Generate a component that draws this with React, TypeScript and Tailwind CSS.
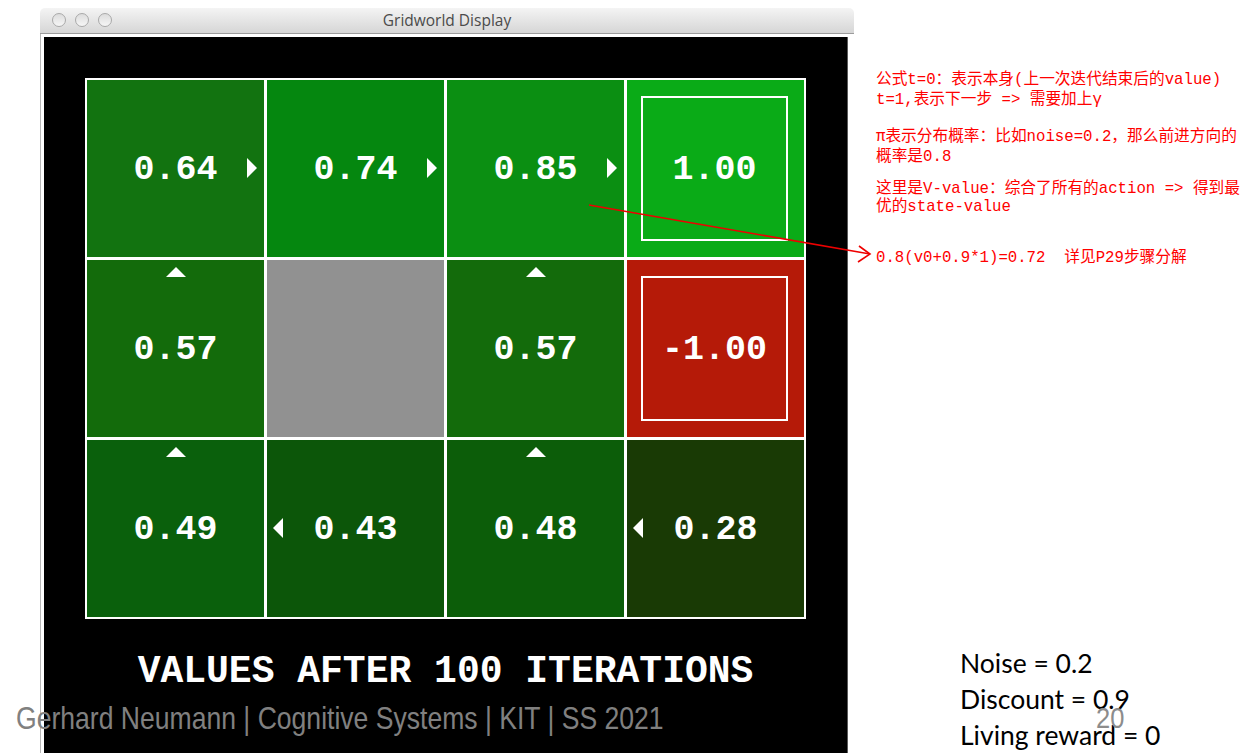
import React from "react";

type Dir = "right" | "left" | "up" | null;
type Cell = { v?: string; bg: string; dir?: Dir; terminal?: boolean; wall?: boolean };

const rows: Cell[][] = [
  [
    { v: "0.64", bg: "bg-[#127310]", dir: "right" },
    { v: "0.74", bg: "bg-[#05870f]", dir: "right" },
    { v: "0.85", bg: "bg-[#0b8f12]", dir: "right" },
    { v: "1.00", bg: "bg-[#0aab17]", terminal: true },
  ],
  [
    { v: "0.57", bg: "bg-[#136b0b]", dir: "up" },
    { bg: "bg-[#919191]", wall: true },
    { v: "0.57", bg: "bg-[#136b0b]", dir: "up" },
    { v: "-1.00", bg: "bg-[#b51a08]", terminal: true },
  ],
  [
    { v: "0.49", bg: "bg-[#0a600c]", dir: "up" },
    { v: "0.43", bg: "bg-[#0c5609]", dir: "left" },
    { v: "0.48", bg: "bg-[#0c5d09]", dir: "up" },
    { v: "0.28", bg: "bg-[#193a05]", dir: "left" },
  ],
];

function Arrow({ dir }: { dir: Dir }) {
  if (dir === "right")
    return (
      <svg className="absolute right-[7px] top-[78px]" width="10" height="20" viewBox="0 0 10 20">
        <polygon points="0,0 10,10 0,20" fill="#fff" />
      </svg>
    );
  if (dir === "left")
    return (
      <svg className="absolute left-[6px] top-[78px]" width="10" height="20" viewBox="0 0 10 20">
        <polygon points="10,0 0,10 10,20" fill="#fff" />
      </svg>
    );
  if (dir === "up")
    return (
      <svg className="absolute left-[79px] top-[7px]" width="20" height="10" viewBox="0 0 20 10">
        <polygon points="0,10 10,0 20,10" fill="#fff" />
      </svg>
    );
  return null;
}

const mono = "font-['Liberation_Mono','Courier_New',monospace]";

function GridCell({ c }: { c: Cell }) {
  const txt = (
    <span className={`${mono} font-bold text-[35px] leading-none text-white mt-[4px]`}>{c.v}</span>
  );
  if (c.wall) return <div className={`${c.bg} w-[177px] h-[177px]`} />;
  if (c.terminal)
    return (
      <div className={`${c.bg} w-[177px] h-[177px] pt-[16px] pb-[16px] pl-[14px] pr-[16px] flex`}>
        <div className="flex-1 border-2 border-white flex items-center justify-center">{txt}</div>
      </div>
    );
  return (
    <div className={`${c.bg} relative w-[177px] h-[177px] flex items-center justify-center`}>
      {txt}
      <Arrow dir={c.dir ?? null} />
    </div>
  );
}

export default function App() {
  const cjk = "font-['Liberation_Mono','Noto_Sans_CJK_SC',monospace]";
  return (
    <div className="relative w-[1244px] h-[753px] bg-white overflow-hidden flex">
      {/* window */}
      <div className="pl-[40px] pt-[8px] shrink-0">
        <div className="w-[814px]">
          <div className="h-[26px] rounded-t-[5px] bg-gradient-to-b from-[#f4f4f4] to-[#d6d6d6] border-b border-[#9c9c9c] relative flex items-center justify-center">
            <div className="absolute left-[12px] top-[5px] flex gap-[9px]">
              <div className="w-[14px] h-[14px] rounded-full border border-[#a9a9a9] bg-gradient-to-b from-[#dcdcdc] to-[#f6f6f6]" />
              <div className="w-[14px] h-[14px] rounded-full border border-[#a9a9a9] bg-gradient-to-b from-[#dcdcdc] to-[#f6f6f6]" />
              <div className="w-[14px] h-[14px] rounded-full border border-[#a9a9a9] bg-gradient-to-b from-[#dcdcdc] to-[#f6f6f6]" />
            </div>
            <span className="font-['Open_Sans',sans-serif] text-[15.5px] text-[#4b4b4b] leading-none">Gridworld Display</span>
          </div>
          <div className="w-[808px] bg-white border-l border-[#b8b8b8] pt-[3px] pl-[3px]">
            <div className="w-[804px] h-[720px] bg-black border-r border-[#5a5a5a] pt-[41px] pl-[41px]">
              <div className="w-[721px] bg-white p-[2px] grid grid-cols-4 gap-[3px]">
                {rows.flat().map((c, i) => (
                  <GridCell key={i} c={c} />
                ))}
              </div>
              <div className="w-[721px] mt-[34px] text-center">
                <span className={`${mono} font-bold text-[38px] leading-[38px] text-white`}>VALUES AFTER 100 ITERATIONS</span>
              </div>
            </div>
          </div>
        </div>
      </div>

      {/* right column */}
      <div className="flex-1 flex flex-col">
        <div className={`${cjk} text-[#ff0000] text-[15.7px] pl-[22px] pt-[70px]`}>
          <div className="leading-[20px]">
            <div>公式t=0：表示本身(上一次迭代结束后的value)</div>
            <div>t=1,表示下一步 =&gt; 需要加上γ</div>
          </div>
          <div className="leading-[20px] mt-[17px]">
            <div>π表示分布概率：比如noise=0.2，那么前进方向的</div>
            <div>概率是0.8</div>
          </div>
          <div className="leading-[18px] mt-[13px]">
            <div>这里是V-value：综合了所有的action =&gt; 得到最</div>
            <div>优的state-value</div>
          </div>
          <div className="leading-[20px] mt-[32px] whitespace-pre">0.8(v0+0.9*1)=0.72  详见P29步骤分解</div>
        </div>
        <div className="mt-auto pl-[106px] font-['Lato',sans-serif] text-[26.5px] leading-[36px] text-black">
          <div>Noise = 0.2</div>
          <div>Discount = 0.9</div>
          <div>Living reward = 0</div>
        </div>
      </div>

      {/* slide footer overlays */}
      <div className="absolute left-[16px] top-[700px] origin-left scale-x-[0.83] font-['Liberation_Sans',sans-serif] text-[32px] leading-[36px] text-[#808080] whitespace-nowrap">
        Gerhard Neumann | Cognitive Systems | KIT | SS 2021
      </div>
      <div className="absolute left-[1096px] top-[700px] origin-left scale-x-[0.85] font-['Liberation_Sans',sans-serif] text-[30px] leading-[36px] text-[#8c8c8c]">
        20
      </div>

      {/* red annotation arrow */}
      <svg className="absolute left-0 top-0 pointer-events-none" width="1244" height="753" viewBox="0 0 1244 753">
        <line x1="589" y1="205" x2="870" y2="254" stroke="#ee0000" strokeWidth="1.6" />
        <polyline points="859,246 870,254 858,262" fill="none" stroke="#ee0000" strokeWidth="1.6" />
      </svg>
    </div>
  );
}
